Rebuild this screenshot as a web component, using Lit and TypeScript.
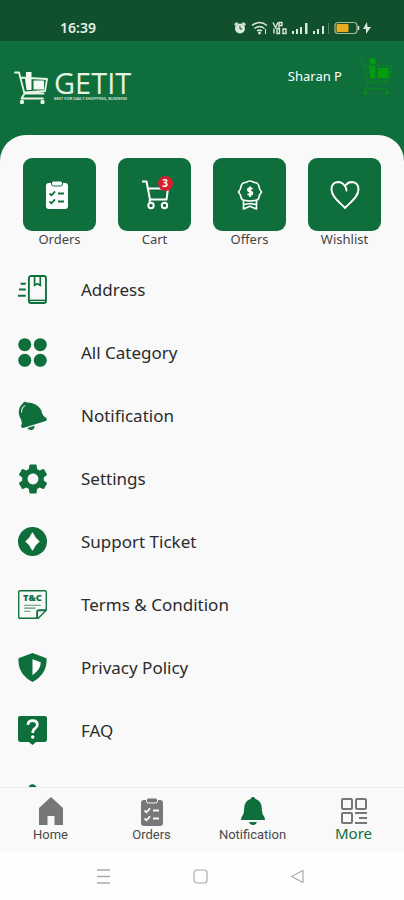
import { LitElement, html, svg, css } from "lit";
import { customElement, property } from "lit/decorators.js";

const GREEN = "#0f6f3c";

const cartArt = (color: string, fill: string, line: number) => svg`
  <g fill="none" stroke=${color} stroke-width=${line} stroke-linejoin="round" stroke-linecap="round">
    <path d="M1 2.500H5L10.500 23.500H29.500M6 7.500L33 9L31 21L10 22.500M10.500 23.500L7.500 28.500H29"/>
  </g>
  <path d="M12 4.500V2h5.500v5H12zM11 8.500h6.500V20h-5zM19.500 10.500H30v9H19.500z" fill=${fill}/>
  <circle cx="8" cy="32" r="2.200" fill=${color}/><circle cx="28.500" cy="32" r="2.200" fill=${color}/>`;

const clipboard = (paper: string, ink: string) => svg`
  <rect x="1" y="3" width="22" height="26" rx="3" fill=${paper}/>
  <rect x="6.500" y="1" width="11" height="5" rx="2" fill=${paper} stroke=${ink} stroke-width="1"/>
  <g fill="none" stroke=${ink} stroke-width="1.800">
    <path d="M4.500 13.500l2 1.800 3.500-4M13 13.500h6M4.500 21.500l2 1.800 3.500-4M13 21.500h6"/>
  </g>`;

const icons: Record<string, unknown> = {
  orders: html`<svg viewBox="0 0 24 30" width="24" height="30">${clipboard("#fff", GREEN)}</svg>`,
  cart: html`<svg viewBox="0 0 28 30" width="28" height="30" fill="none" stroke="#fff" stroke-width="2" stroke-linejoin="round">
    <path d="M1 1.500h4.500L9 19.500h16.500L27 8.500H7"/><circle cx="10" cy="25.500" r="2.700"/><circle cx="23.500" cy="25.500" r="2.700"/>
    <path d="M9 19.500l-.5 2.500"/></svg>`,
  offers: html`<svg viewBox="0 0 26 30" width="26" height="30" fill="none" stroke="#fff" stroke-width="1.600" stroke-linejoin="round">
    <path d="M9 2.500Q13-.5 17 2.500Q21 2 22 6.500Q22 9 24.500 12Q22 15 22 17.500Q21 21 17 20.500Q13 21.500 9 20.500Q5 21 4 17.500Q4 15 1.500 12Q4 9 4 6.500Q5 2 9 2.500Z"/>
    <path d="M6.500 21v8l6.500-2.800 6.500 2.800v-8M7 24.500l6-1 6 1"/>
    <path d="M15.500 9Q13 7.500 11 9Q10.300 11 13 11.500Q16 12 15.200 14Q13.500 15.500 10.500 14M13 6.500v10.500" stroke-width="1.800"/></svg>`,
  wishlist: html`<svg viewBox="0 0 30 30" width="30" height="30" fill="none" stroke="#fff" stroke-width="1.900" stroke-linecap="round" stroke-linejoin="round">
    <path d="M16.500 10.500Q16.500 8 14.500 5.500Q12 2 8 2Q1.500 2.500 1.500 9.500C1.500 17 10 22.500 15 28C20 22.500 28.500 17 28.500 9.500Q28.500 2.500 22 2Q18 2 16 5"/></svg>`,
  address: html`<svg viewBox="0 0 28 28" width="29" height="29" fill="none" stroke=${GREEN} stroke-width="1.800">
    <rect x="10.500" y="1" width="16.500" height="26" rx="2"/><path d="M11 24.500h16" stroke-width="1.500"/>
    <path d="M16 1v9l2.500-1.500L21.500 10V1" stroke-width="1.600"/><path d="M2.500 8.500h5M1 14h6.500M0 20h7.500" stroke-width="2"/></svg>`,
  category: html`<svg viewBox="0 0 28 28" width="29" height="29" fill=${GREEN}>
    <circle cx="6.500" cy="6.500" r="6.300"/><circle cx="21.500" cy="6.500" r="6.300"/><circle cx="6.500" cy="21.500" r="6.300"/><circle cx="21.500" cy="21.500" r="6.300"/></svg>`,
  bellTilt: html`<svg viewBox="0 0 28 28" width="29" height="29" fill=${GREEN}>
    <path d="M5 2Q6-.5 9 1.500Q18 1.500 22.500 9Q23.500 15 27.500 16.500Q28.500 19 26 19.500L5 26Q2.500 26 3 23.500Q5 21 1.500 15Q-1 7 5 2Z"/>
    <path d="M9 26l7-2.200Q16 28 12.500 28Q10 28 9 26Z"/><path d="M3.500 11Q3 6.500 7 4.500" fill="none" stroke="#f9f9f9" stroke-width="1"/></svg>`,
  settings: html`<svg viewBox="2 2 20 20" width="30" height="30" fill=${GREEN}>
    <path d="M19.140 12.940c.04-.3.06-.61.06-.94 0-.32-.02-.64-.07-.94l2.030-1.580c.18-.14.23-.41.12-.61l-1.920-3.320c-.12-.22-.37-.29-.59-.22l-2.390.96c-.5-.38-1.030-.7-1.620-.94l-.36-2.540c-.04-.24-.24-.41-.48-.41h-3.840c-.24 0-.43.17-.47.41l-.36 2.540c-.59.24-1.130.57-1.620.94l-2.390-.96c-.22-.08-.47 0-.59.22L2.740 8.870c-.12.21-.08.47.12.61l2.030 1.580c-.05.3-.09.63-.09.94s.02.64.07.94l-2.030 1.580c-.18.14-.23.41-.12.61l1.920 3.320c.12.22.37.29.59.22l2.390-.96c.5.38 1.030.7 1.620.94l.36 2.540c.05.24.24.41.48.41h3.840c.24 0 .44-.17.47-.41l.36-2.540c.59-.24 1.130-.56 1.620-.94l2.390.96c.22.08.47 0 .59-.22l1.920-3.320c.12-.22.07-.47-.12-.61l-2.010-1.580zM12 15.600c-1.980 0-3.600-1.620-3.600-3.600s1.620-3.600 3.600-3.600 3.600 1.620 3.600 3.600-1.620 3.600-3.600 3.600z"/></svg>`,
  support: html`<svg viewBox="0 0 28 28" width="29" height="29"><circle cx="14" cy="14" r="14" fill=${GREEN}/><path d="M14 5.500Q16.500 11 20.500 14Q16.500 17 14 22.500Q11.500 17 7.500 14Q11.500 11 14 5.500Z" fill="#fff" stroke="#fff" stroke-width=".8"/></svg>`,
  terms: html`<svg viewBox="0 0 28 28" width="29" height="29" fill="none" stroke=${GREEN} stroke-width="1.300">
    <path d="M2 .7h24q1.300 0 1.300 1.300v17.500L19.500 27.300H2Q.7 27.300.7 26V2Q.7.7 2 .7Z"/><path d="M27 19.500h-7q-1.500 0-1.500 1.500v6" stroke-width="1.800"/>
    <path d="M6 14.700h16M6 17.500h11M6 20.500h6" stroke-width="1" opacity=".7"/>
    <text x="14" y="11" text-anchor="middle" font-family="Noto Sans, sans-serif" font-weight="900" font-size="9" fill=${GREEN} stroke="none">T&amp;C</text></svg>`,
  privacy: html`<svg viewBox="0 0 28 28" width="29" height="29"><path d="M14 0L27.500 5Q28.500 20 14 28Q-.5 20 .5 5Z" fill=${GREEN}/><path d="M14 6L22 9Q22 16 14 21.500Z" fill="#fff"/></svg>`,
  faq: html`<svg viewBox="0 0 28 28" width="29" height="29"><path d="M2 0h24q2 0 2 2v21q0 2-2 2h-8.500L14 28l-3.500-3H2q-2 0-2-2V2Q0 0 2 0Z" fill=${GREEN}/>
    <path d="M9.500 8.500Q10 4.500 14 4.500Q18.500 4.500 18.700 8.500Q18.700 10.500 16.500 12Q14.200 13.500 14.200 16.500" fill="none" stroke="#fff" stroke-width="2.600"/><circle cx="14.200" cy="20.300" r="1.700" fill="#fff"/></svg>`,
  about: html`<svg viewBox="0 0 28 28" width="29" height="29" fill=${GREEN}><circle cx="14" cy="9" r="4"/><path d="M10 15h8v12h-8z"/></svg>`,
  navHome: html`<svg viewBox="0 0 26 28" width="26" height="28" fill="#777"><path d="M13 0L25 11V28H16.500V19H9.500V28H1V11Z"/></svg>`,
  navOrders: html`<svg viewBox="0 0 24 30" width="24" height="30">${clipboard("#777", "#f9f9f9")}</svg>`,
  navBell: html`<svg viewBox="0 0 26 28" width="26" height="28" fill=${GREEN}><path d="M13 0q2 0 2.500 2Q21.500 4 21.800 11Q22 17 23.500 18.500Q25 20 25 23H1Q1 20 2.500 18.500Q4 17 4.200 11Q4.500 4 10.500 2Q11 0 13 0Z"/><path d="M9 25h8q-1 3-4 3t-4-3Z"/></svg>`,
  navMore: html`<svg viewBox="0 0 26 26" width="26" height="26" fill="none" stroke="#777" stroke-width="2"><rect x="1" y="1" width="10" height="10" rx="1"/><rect x="15" y="1" width="10" height="10" rx="1"/><rect x="1" y="15" width="10" height="10" rx="1"/><path d="M14 15h12M18 20h8M14 25h12" stroke-width="1.800"/></svg>`,
};

@customElement("status-bar")
class StatusBar extends LitElement {
  static styles = css`
    :host { display: flex; align-items: center; justify-content: space-between; height: 41px; padding: 14px 32px 0 60px;
      box-sizing: border-box; background: #11502d; color: #e6f0e8; font: 600 14px/26px "Noto Sans", sans-serif; }
    svg { display: block; }
  `;
  render() {
    return html`<time>16:39</time>
      <svg viewBox="0 0 138 14" width="138" height="14" fill="#dce8dd" role="img" aria-label="Alarm, Wi-Fi, signal, battery charging">
        <circle cx="6" cy="7.500" r="5"/><path d="M0 3L3 1l1 1.500L1.500 5zM12 3L9 1 8 2.500 10.500 5z"/><path d="M6 4.800V8h2.200" fill="none" stroke="#11502d"/>
        <g fill="none" stroke="#dce8dd" stroke-width="1.500"><path d="M18 4.500q7.500-6 15 0M20.500 7.500q5-4 10 0M23 10q2.500-2 5 0"/></g><circle cx="25.500" cy="12" r="1.400"/>
        <path d="M31 8h1v5h-1z"/>
        <g fill="none" stroke="#dce8dd" stroke-width="1.400"><path d="M39 1.500l2.500 5 2.500-5M45 6.500V1.500h3v3h-3M40 7.500v5M43 7.500v5h2.500v-5zM49 8v4.500h3V8z"/></g>
        <path d="M58 10h2v3h-2zM62 8h2v5h-2zM66 6h2v7h-2zM71 2h2.500v11H71zM79 10h2v3h-2zM83 8h2v5h-2zM88 5h2v8h-2z"/><path d="M94 2h1v11h-1z" opacity=".3"/>
        <rect x="101" y="1.500" width="22" height="11" rx="3" fill="none" stroke="#a9b98f" stroke-width="1.200"/><rect x="102.500" y="3" width="12" height="8" rx="1" fill="#eaab1c"/><path d="M124.500 5v4" stroke="#dce8dd" stroke-width="1.500"/>
        <path d="M133 1l-4 7h3v5l5-7h-3.500z"/>
      </svg>`;
  }
}

@customElement("quick-tile")
class QuickTile extends LitElement {
  @property() icon = "";
  @property() label = "";
  @property({ type: Number }) count = 0;
  static styles = css`
    :host { display: block; min-width: 0; }
    button { all: unset; display: flex; flex-direction: column; align-items: center; width: 100%; cursor: pointer; }
    .face { display: grid; place-items: center; width: 100%; aspect-ratio: 1; border-radius: 9px; background: #0f6f3c; }
    .art { position: relative; display: grid; place-items: center; width: 30px; height: 30px; }
    .art.start { margin-right: 6px; }
    .badge { position: absolute; top: -4px; right: -3px; width: 15px; height: 15px; border-radius: 50%; background: #d6202c;
      color: #fff; font: 700 10px/15px "Noto Sans", sans-serif; text-align: center; }
    .label { font: 13px/16px "Noto Sans", sans-serif; color: #444; }
  `;
  render() {
    return html`<button type="button">
      <span class="face"><span class="art ${this.icon === "orders" ? "start" : ""}">${icons[this.icon]}
        ${this.count ? html`<span class="badge">${this.count}</span>` : ""}</span></span>
      <span class="label">${this.label}</span>
    </button>`;
  }
}

@customElement("app-root")
class AppRoot extends LitElement {
  static styles = css`
    :host { display: flex; flex-direction: column; height: 100vh; background: #0f6f3c; font-family: "Noto Sans", sans-serif; overflow: hidden; }
    a { color: inherit; text-decoration: none; }
    svg { display: block; flex: none; }
    header { display: flex; justify-content: space-between; align-items: flex-start; height: 94px; padding: 15px 10px 0 14px; box-sizing: border-box; }
    .brand { display: flex; gap: 5px; padding-top: 14px; color: #e6f2e4; }
    .words { display: flex; flex-direction: column; }
    .name { font: 29px/26px "Open Sans", sans-serif; }
    .tag { font: 600 4px/6px "Open Sans", sans-serif; white-space: nowrap; }
    .user { display: flex; align-items: center; gap: 15px; color: #fff; font-size: 13px; line-height: 18px; }
    main { flex: 1; min-height: 0; display: flex; flex-direction: column; gap: 11px; padding-top: 23px; background: #f9f9f9; border-radius: 26px 26px 0 0; overflow: hidden; }
    .tiles { display: grid; grid-template-columns: repeat(4, 1fr); gap: 22px; padding: 0 23px; }
    ul { list-style: none; margin: 0; padding: 0; }
    .row { display: flex; align-items: center; height: 63px; padding-left: 18px; color: #2b2b2b; font-size: 17px; line-height: 24px; }
    .icon { display: grid; place-items: center; width: 29px; margin-right: 34px; }
    .tabs { display: grid; grid-template-columns: repeat(4, 1fr); height: 65px; box-sizing: border-box; padding-top: 9px; border-top: 1px solid #ececec; background: #f9f9f9; flex: none; }
    .tab { display: flex; flex-direction: column; align-items: center; gap: 2px; color: #4a4a4a; font: 13px/16px Roboto, sans-serif; }
    .glyph { display: grid; place-items: center; height: 28px; }
    .tab.current { color: #0f6f3c; font: 15px/16px "Noto Sans", sans-serif; gap: 0; }
    .system { display: flex; justify-content: center; align-items: center; gap: 82px; height: 48px; padding-right: 4px; background: #fefefe; flex: none; }
    .system button { all: unset; cursor: pointer; }
  `;

  private rows = [
    ["address", "Address"], ["category", "All Category"], ["bellTilt", "Notification"], ["settings", "Settings"],
    ["support", "Support Ticket"], ["terms", "Terms & Condition"], ["privacy", "Privacy Policy"], ["faq", "FAQ"], ["about", "About Us"],
  ];
  private tabs = [["navHome", "Home"], ["navOrders", "Orders"], ["navBell", "Notification"], ["navMore", "More"]];

  render() {
    return html`
      <status-bar></status-bar>
      <header>
        <a class="brand" href="#home">
          <svg viewBox="0 0 35 35" width="35" height="35">${cartArt("#e9f4e6", "#f4faf2", 1.8)}</svg>
          <span class="words"><span class="name">GETIT</span><span class="tag">BEST FOR DAILY SHOPPING, BUSINESS</span></span>
        </a>
        <a class="user" href="#profile">Sharan P
          <svg viewBox="0 0 35 35" width="37" height="40" preserveAspectRatio="none">${cartArt("#0b8424", "#069a0e", 1)}</svg>
        </a>
      </header>
      <main>
        <div class="tiles">
          <quick-tile icon="orders" label="Orders"></quick-tile>
          <quick-tile icon="cart" label="Cart" count="3"></quick-tile>
          <quick-tile icon="offers" label="Offers"></quick-tile>
          <quick-tile icon="wishlist" label="Wishlist"></quick-tile>
        </div>
        <ul>${this.rows.map(([icon, label]) => html`<li><a class="row" href="#${icon}"><span class="icon">${icons[icon]}</span>${label}</a></li>`)}</ul>
      </main>
      <nav class="tabs">
        ${this.tabs.map(([icon, label]) => html`<a class="tab ${label === "More" ? "current" : ""}" href="#${icon}"><span class="glyph">${icons[icon]}</span>${label}</a>`)}
      </nav>
      <div class="system">
        <button type="button" aria-label="Recent apps"><svg viewBox="0 0 15 15" width="15" height="15" stroke="#aaa" stroke-width="1.300"><path d="M1 1h13M1 7.500h13M1 14h13"/></svg></button>
        <button type="button" aria-label="Home screen"><svg viewBox="0 0 15 15" width="15" height="15" fill="none" stroke="#aaa" stroke-width="1.200"><rect x="1" y="1" width="13" height="13" rx="3"/></svg></button>
        <button type="button" aria-label="Back"><svg viewBox="0 0 15 15" width="15" height="15" fill="none" stroke="#aaa" stroke-width="1.200" stroke-linejoin="round"><path d="M13 1.500v12L1.500 7.500z"/></svg></button>
      </div>`;
  }
}
